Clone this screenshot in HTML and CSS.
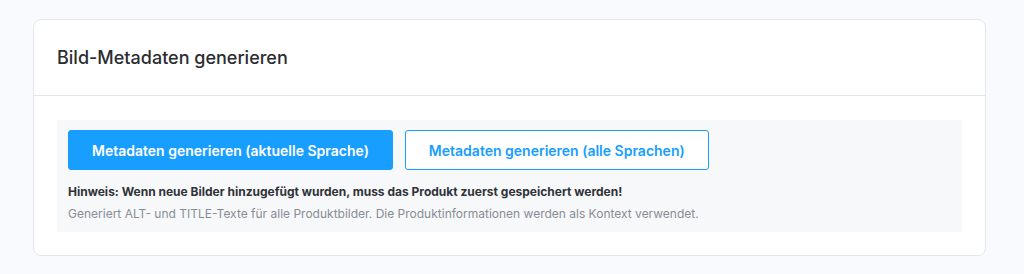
FILE: index.html
```html
<!DOCTYPE html>
<html lang="de">
<head>
<meta charset="utf-8">
<link rel="stylesheet" href="styles.css">
</head>
<body>
<div class="card">
  <div class="card-header">
    <h2 class="card-title">Bild-Metadaten generieren</h2>
  </div>
  <div class="card-body">
    <div class="panel">
      <div class="actions">
        <button class="btn btn-primary">Metadaten generieren (aktuelle Sprache)</button>
        <button class="btn btn-outline">Metadaten generieren (alle Sprachen)</button>
      </div>
      <p class="hint">Hinweis: Wenn neue Bilder hinzugefügt wurden, muss das Produkt zuerst gespeichert werden!</p>
      <p class="desc">Generiert ALT- und TITLE-Texte für alle Produktbilder. Die Produktinformationen werden als Kontext verwendet.</p>
    </div>
  </div>
</div>
</body>
</html>
```
FILE: styles.css
```css
* { box-sizing: border-box; }
html, body { margin: 0; padding: 0; }
body {
  background: #f9fafd;
  font-family: Inter, "Noto Sans", sans-serif;
  padding: 19px 38px 0 33px;
  height: 274px;
}
.card {
  background: #fff;
  border: 1px solid #e3e6ec;
  border-radius: 8px;
  width: 953px;
}
.card-header {
  height: 76px;
  border-bottom: 1px solid #e3e6ec;
  display: flex;
  align-items: center;
  padding: 0 23px;
}
.card-title {
  margin: 0;
  font-size: 18px;
  font-weight: 500;
  color: #2a2c30;
}
.card-body {
  padding: 24px 23px 23px;
}
.panel {
  background: #f7f8fa;
  padding: 10px 11px 10px;
}
.actions {
  display: flex;
  gap: 12px;
}
.btn {
  height: 40px;
  border-radius: 3px;
  font-family: Inter, "Noto Sans", sans-serif;
  font-size: 14px;
  font-weight: 600;
  padding: 0 23px;
  cursor: pointer;
}
.btn-primary {
  background: #189eff;
  border: 1px solid #189eff;
  color: #fff;
}
.btn-outline {
  background: #fff;
  border: 1px solid #189eff;
  color: #189eff;
}
.hint {
  margin: 14px 0 0;
  font-size: 12px;
  font-weight: 700;
  color: #2f3338;
  line-height: 16px;
}
.desc {
  margin: 6px 0 0;
  font-size: 12px;
  color: #878d95;
  line-height: 16px;
}
```
